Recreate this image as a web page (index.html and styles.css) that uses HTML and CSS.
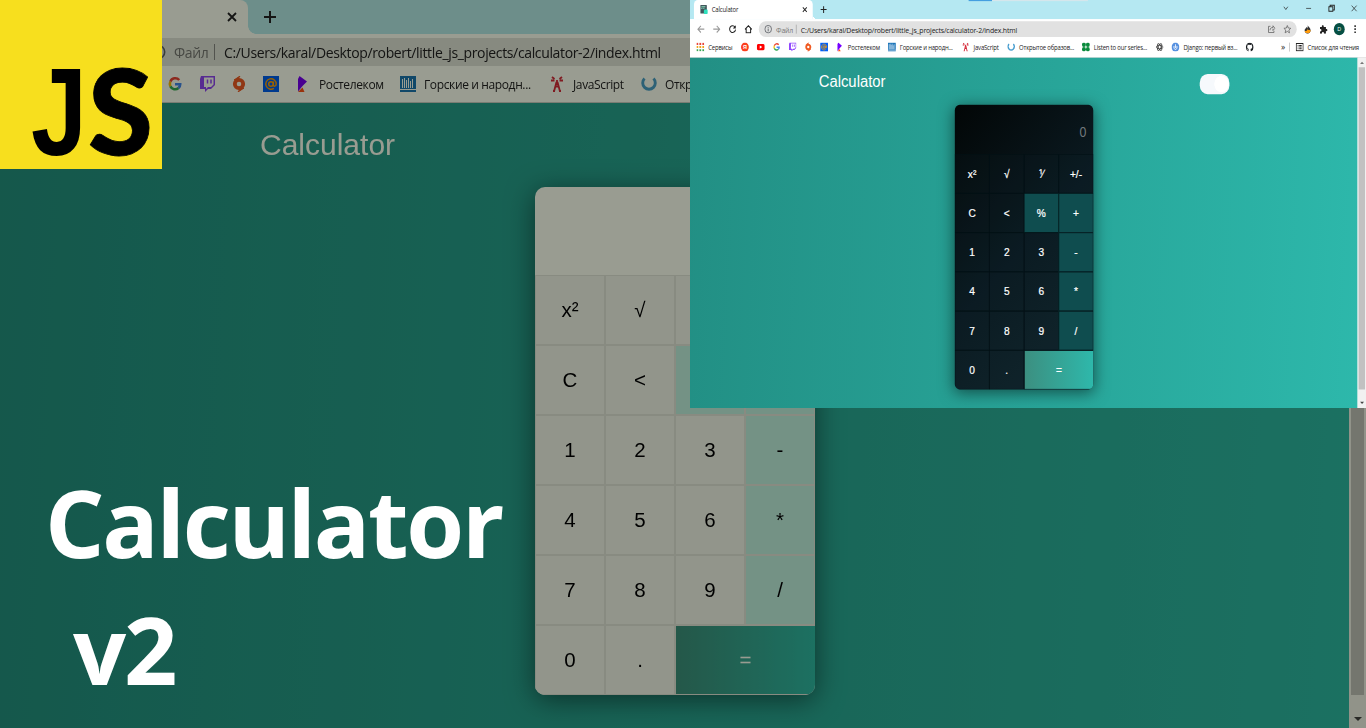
FILE: index.html
```html
<!DOCTYPE html>
<html lang="ru">
<head>
<meta charset="utf-8">
<title>Calculator v2</title>
<link rel="stylesheet" href="styles.css">
</head>
<body>
<svg class="sprite" aria-hidden="true">
  <symbol id="close" viewBox="0 0 16 16"><path d="M4 4l8 8M12 4l-8 8" stroke="#222" stroke-width="1.8" fill="none"/></symbol>
  <symbol id="plus" viewBox="0 0 16 16"><path d="M8 2v12M2 8h12" stroke="#222" stroke-width="2" fill="none"/></symbol>
  <symbol id="info" viewBox="0 0 16 16"><circle cx="8" cy="8" r="6.7" stroke="#5f6368" stroke-width="1.6" fill="none"/><path d="M8 7v5M8 4v1.6" stroke="#5f6368" stroke-width="1.7"/></symbol>
  <symbol id="google" viewBox="0 0 16 16"><g fill="none" stroke-width="2.6"><path d="M12.2 4A5.2 5.2 0 0 0 3.4 5.6" stroke="#ea4335"/><path d="M3.4 5.6a5.2 5.2 0 0 0 0 4.8" stroke="#fbbc05"/><path d="M3.4 10.4A5.2 5.2 0 0 0 11.5 12" stroke="#34a853"/><path d="M8 8.2h5.2a5.2 5.2 0 0 1-1.7 3.8" stroke="#4285f4"/></g></symbol>
  <symbol id="twitch" viewBox="0 0 16 16"><path d="M2 0h14v9l-4 4H9l-3 3v-3H1V3z" fill="#9146ff"/><path d="M5 1.500h9.500v7L12 11H9l-2 2v-2H5z" fill="#fff"/><path d="M8.500 3.500v4M12 3.500v4" stroke="#9146ff" stroke-width="1.500"/></symbol>
  <symbol id="origin" viewBox="0 0 16 16"><circle cx="8" cy="8" r="4.200" fill="none" stroke="#f05a22" stroke-width="3.800"/><path d="M9 0L7 3 3 4zM7 16l2-3 4-1z" fill="#f05a22" stroke="#f05a22"/></symbol>
  <symbol id="mail" viewBox="0 0 16 16"><rect width="16" height="16" fill="#005ff9"/><circle cx="8" cy="8" r="2.300" fill="none" stroke="#ff9e00" stroke-width="1.500"/><path d="M10.400 5.500v3.400c0 2 2.800 1.600 2.800-.9a5.200 5.200 0 1 0-2.300 4.300" fill="none" stroke="#ff9e00" stroke-width="1.400"/></symbol>
  <symbol id="rtk" viewBox="0 0 16 16"><path d="M4.500 0L12 5.500 7.500 10 3 15.500V3z" fill="#7700ff"/><path d="M3 16l4.500-4.500L9.500 16z" fill="#ff4f12"/></symbol>
  <symbol id="radio" viewBox="0 0 16 16"><rect width="16" height="16" fill="#1c75b9"/><path d="M2.500 3v9M4.500 2v10M6.500 4v8M8.500 2v10M10.500 5v7M12.500 3v9" stroke="#fff" stroke-width="1"/><path d="M0 13.500h16" stroke="#fff"/></symbol>
  <symbol id="tower" viewBox="0 0 16 16"><path d="M7.500 6L5 15.500M8.500 6L11 15.500M6 10.500h4M4 15h2M10 15h2M3 1l2.500 2M13 1l-2.500 2M2 4.500h3.500M14 4.500h-3.500M8 4v5" stroke="#d52b3a" stroke-width="1.800" fill="none"/></symbol>
  <symbol id="ring" viewBox="0 0 16 16"><path d="M3.500 2.500A6.300 6.300 0 1 0 12.500 2.500" stroke="#4a9fd0" stroke-width="2.900" fill="none"/></symbol>
</svg>

<main class="stage">
  <section class="window light">
    <div class="tabs">
      <div class="tab"><svg class="tab-close"><use href="#close"/></svg></div>
      <svg class="tab-plus"><use href="#plus"/></svg>
    </div>
    <div class="toolbar">
      <div class="nav"></div>
      <div class="address">
        <svg class="i16"><use href="#info"/></svg><span class="scheme">Файл</span><i class="bar"></i><span class="url">C:/Users/karal/Desktop/robert/little_js_projects/calculator-2/index.html</span>
      </div>
    </div>
    <div class="bookmarks from-google">
      <a><svg><use href="#google"/></svg></a>
      <a><svg><use href="#twitch"/></svg></a>
      <a><svg><use href="#origin"/></svg></a>
      <a><svg><use href="#mail"/></svg></a>
      <a><svg><use href="#rtk"/></svg><span class="t-rtk">Ростелеком</span></a>
      <a><svg><use href="#radio"/></svg><span class="t-radio">Горские и народн...</span></a>
      <a><svg><use href="#tower"/></svg><span class="t-js">JavaScript</span></a>
      <a><svg><use href="#ring"/></svg><span class="t-open">Откр</span></a>
    </div>
    <div class="page">
      <div class="content">
        <h2>Calculator</h2>
        <div class="calc">
          <div class="display"></div>
          <div class="keys">
            <b>x²</b><b>√</b><b></b><b></b>
            <b>C</b><b>&lt;</b><b class="op"></b><b class="op"></b>
            <b>1</b><b>2</b><b>3</b><b class="op">-</b>
            <b>4</b><b>5</b><b>6</b><b class="op">*</b>
            <b>7</b><b>8</b><b>9</b><b class="op">/</b>
            <b>0</b><b>.</b><b class="equals">=</b>
          </div>
        </div>
      </div>
      <div class="scroll"><i class="up"></i><i class="thumb"></i><i class="down"></i></div>
    </div>
  </section>

  <section class="preview">
    <div class="window dark">
      <div class="tabs">
        <div class="tab">
          <svg class="i16" viewBox="0 0 16 16"><rect x="1" width="13" height="15" rx="1" fill="#42565c"/><path d="M3 3h8M3 6h2M7 6h2" stroke="#8db" stroke-width="2"/><rect x="8" y="8" width="8" height="8" rx="2" fill="#2fe0bd"/></svg>
          <span class="tab-name">Calculator</span>
          <svg class="tab-close"><use href="#close"/></svg>
        </div>
        <svg class="tab-plus"><use href="#plus"/></svg>
        <i class="progress"></i>
        <div class="controls">
          <svg viewBox="0 0 16 16"><path d="M4 5l4 5 4-5"/></svg>
          <svg viewBox="0 0 16 16"><path d="M3 8h10"/></svg>
          <svg viewBox="0 0 16 16"><path d="M3 5h8v8H3zM5.500 5V2.500H14V11h-3" stroke-width="1.800"/></svg>
          <svg viewBox="0 0 16 16"><path d="M3 3l10 10M13 3L3 13"/></svg>
        </div>
      </div>
      <div class="toolbar">
        <div class="nav">
          <svg class="dim" viewBox="0 0 16 16"><path d="M15 8H2M8 2L2 8l6 6"/></svg>
          <svg class="dim" viewBox="0 0 16 16"><path d="M1 8h13M8 2l6 6-6 6"/></svg>
          <svg viewBox="0 0 16 16"><path d="M13 4.500A6 6 0 1 0 14 9"/><path d="M14.500 1v6h-6z" fill="#222" stroke="none"/></svg>
          <svg viewBox="0 0 16 16"><path d="M1 8.500L8 2l7 6.500M3.500 7v7.500h9V7"/></svg>
        </div>
        <div class="address">
          <svg class="i16"><use href="#info"/></svg><span class="scheme">Файл</span><i class="bar"></i><span class="url">C:/Users/karal/Desktop/robert/little_js_projects/calculator-2/index.html</span>
          <div class="page-actions">
            <svg viewBox="0 0 16 16"><path d="M6 3H2v11h11v-3M5 10c0-4 3-5 6-5V2l4 4.500-4 4V7"/></svg>
            <svg viewBox="0 0 16 16"><path d="M8 1.500l2 4.500 5 .5-3.800 3.200 1.200 5L8 12l-4.400 2.700 1.200-5L1 6.500 6 6z"/></svg>
          </div>
        </div>
        <div class="extensions">
          <svg viewBox="0 0 16 16"><path d="M8 0c1 4 6 5 6 10 0 8-12 8-12 0 0-3 3-3 3-6 2 1 2 2 2 3 1-2 2-4 1-7z" fill="#333"/><path d="M8 8c3 3 6 0 6 3-1 6-11 6-12 0 3 1 4 0 6-3z" fill="#ff9b0b"/></svg>
          <svg viewBox="0 0 16 16"><path d="M1 4h4c-2-4 5-4 3.500 0H13v4c4-2 4 5 0 3.500V16H9c1-4-5-4-4 0H1v-4c4 1 4-5 0-4z" fill="#222"/></svg>
          <span class="avatar">D</span>
          <svg viewBox="0 0 16 16"><path d="M8 1v3M8 6.500v3M8 12v3" stroke="#222" stroke-width="3"/></svg>
        </div>
      </div>
      <div class="bookmarks">
        <a><svg viewBox="0 0 16 16"><g stroke-width="3.600" stroke-dasharray="3.600 2.400"><path d="M0 2.300h16" stroke="#e8463a"/><path d="M0 8h16" stroke="#f2a31b"/><path d="M0 13.700h16" stroke="#39a653"/></g></svg><span class="t-apps">Сервисы</span></a>
        <a><svg viewBox="0 0 16 16"><circle cx="8" cy="8" r="8" fill="#fc3f1d"/><text x="4.300" y="12" class="ya">Я</text></svg></a>
        <a><svg viewBox="0 0 16 16"><rect y="2.500" width="16" height="11" rx="3" fill="#f00"/><path d="M6 5l5 3-5 3z" fill="#fff"/></svg></a>
        <a><svg><use href="#google"/></svg></a>
        <a><svg><use href="#twitch"/></svg></a>
        <a><svg><use href="#origin"/></svg></a>
        <a><svg><use href="#mail"/></svg></a>
        <a><svg><use href="#rtk"/></svg><span class="t-rtk">Ростелеком</span></a>
        <a><svg><use href="#radio"/></svg><span class="t-radio">Горские и народн...</span></a>
        <a><svg><use href="#tower"/></svg><span class="t-js">JavaScript</span></a>
        <a><svg><use href="#ring"/></svg><span class="t-open">Открытое образов...</span></a>
        <a><svg viewBox="0 0 16 16"><g fill="#0a8a3c"><circle cx="4" cy="4" r="4"/><circle cx="12" cy="4" r="4"/><circle cx="4" cy="12" r="4"/><circle cx="12" cy="12" r="4"/></g></svg><span class="t-listen">Listen to our series...</span></a>
        <a><svg viewBox="0 0 16 16"><g fill="none" stroke="#333" stroke-width="1.300"><ellipse cx="8" cy="8" rx="7" ry="3"/><ellipse cx="8" cy="8" rx="7" ry="3" transform="rotate(60 8 8)"/><ellipse cx="8" cy="8" rx="7" ry="3" transform="rotate(120 8 8)"/></g></svg></a>
        <a><svg viewBox="0 0 16 16"><circle cx="8" cy="8" r="8" fill="#5590e0"/><path d="M8 3v7M5 6v4l3 3 3-3V6" stroke="#fff" stroke-width="1.600" fill="none"/></svg><span class="t-django">Django: первый вз...</span></a>
        <a><svg viewBox="0 0 16 16"><path d="M8 .2a8 8 0 0 0-2.500 15.500c.4.100.5-.2.500-.4v-1.500c-2.200.5-2.700-1-2.700-1-.4-.9-.9-1.100-.9-1.100-.7-.5.1-.5.1-.5.800.1 1.200.8 1.200.8.700 1.200 1.900.9 2.300.7.100-.5.300-.9.500-1.100-1.800-.2-3.600-.9-3.600-4 0-.9.300-1.600.8-2.100-.1-.2-.4-1 .1-2.100 0 0 .7-.2 2.200.8a7.600 7.600 0 0 1 4 0c1.500-1 2.200-.8 2.200-.8.400 1.100.200 1.900.1 2.100.5.600.8 1.300.8 2.100 0 3.100-1.900 3.700-3.700 3.900.3.300.6.800.6 1.500v2.300c0 .2.100.5.600.4A8 8 0 0 0 8 .2z" fill="#1b1f23"/></svg></a>
        <span class="more">»</span><i class="bar"></i>
        <a class="reading"><svg viewBox="0 0 16 16"><path d="M1 1.500h14v13H1zM4 5h1.500M7 5h5M4 8h1.500M7 8h5M4 11h1.500M7 11h5" stroke="#222" stroke-width="1.800" fill="none"/></svg><span class="t-read">Список для чтения</span></a>
      </div>
      <div class="page">
        <div class="content">
          <h2>Calculator</h2>
          <i class="toggle"></i>
          <div class="calc">
            <div class="display">0</div>
            <div class="keys">
              <b>x²</b><b>√</b><b>⅟</b><b>+/-</b>
              <b>C</b><b>&lt;</b><b class="op">%</b><b class="op">+</b>
              <b>1</b><b>2</b><b>3</b><b class="op">-</b>
              <b>4</b><b>5</b><b>6</b><b class="op">*</b>
              <b>7</b><b>8</b><b>9</b><b class="op">/</b>
              <b>0</b><b>.</b><b class="equals">=</b>
            </div>
          </div>
        </div>
        <div class="scroll"><i class="up"></i><i class="thumb"></i><i class="down"></i></div>
      </div>
    </div>
  </section>

  <svg class="js-logo" viewBox="0 0 162 169">
    <rect width="162" height="169" fill="#f7df1e"/>
    <text class="letter-j" transform="translate(31 155)" textLength="56" lengthAdjust="spacingAndGlyphs">J</text>
    <text class="letter-s" transform="translate(88 155)" textLength="65" lengthAdjust="spacingAndGlyphs">S</text>
  </svg>
  <h1 class="headline"><span>Calculator</span><span class="version">v2</span></h1>
</main>
</body>
</html>
```
FILE: styles.css
```css
* { box-sizing: border-box; }
body { margin: 0; background: #165a4f; }
.sprite { position: absolute; width: 0; height: 0; }

.stage { position: relative; width: 1366px; height: 728px; overflow: hidden; }
.window {
  position: relative;
  display: flex;
  flex-direction: column;
  width: 1366px;
  height: 728px;
  overflow: hidden;
  background: #fff;
  font-family: "Open Sans", "Noto Sans", sans-serif;
  color: #222;
}
.window.light::after {
  content: "";
  position: absolute;
  inset: 0;
  background: #999c91;
  mix-blend-mode: multiply;
}
.preview { position: absolute; left: 690px; top: 0; width: 676px; height: 408px; overflow: hidden; }
.preview .window { transform: scale(.49488, .56044); transform-origin: 0 0; }

.tabs { display: flex; align-items: center; height: 34px; padding-left: 8px; background: #b5e8f2; position: relative; }
.tab {
  display: flex;
  align-items: center;
  gap: 8px;
  width: 240px;
  height: 34px;
  padding: 0 8px 0 12px;
  background: #fff;
  border-radius: 8px 8px 0 0;
  position: relative;
}
.tab::after {
  content: "";
  position: absolute;
  left: 100%;
  bottom: 0;
  width: 8px;
  height: 8px;
  background: radial-gradient(circle at 100% 0, transparent 7.5px, #fff 8px);
}
.tab-name { font-size: 12px; letter-spacing: -.3px; }
.tab-close { width: 16px; height: 16px; margin-left: auto; }
.tab-plus { width: 16px; height: 16px; margin-left: 14px; }
.progress { position: absolute; left: 563px; top: 0; width: 241px; height: 2px; background: linear-gradient(to right, #459fe0 47px, #d5e6ec 47px); }
.controls { display: flex; gap: 30px; margin-left: auto; padding-right: 16px; margin-top: -5px; }
.controls svg { width: 16px; height: 16px; fill: none; stroke: #222; stroke-width: 1.3; }

.i16 { width: 16px; height: 16px; flex: none; }
.toolbar { display: flex; align-items: center; height: 36px; }
.nav { display: flex; gap: 16px; width: 139px; padding-left: 14px; flex: none; }
.nav svg { width: 16px; height: 16px; fill: none; stroke: #222; stroke-width: 2; }
.nav .dim { stroke: #999; }
.address { display: flex; align-items: center; width: 1087px; height: 28px; padding-left: 11px; border-radius: 14px; background: #e1e1e1; white-space: nowrap; font-size: 14px; }
.light .address { width: 1227px; border-radius: 14px 0 0 14px; }
.scheme { width: 33px; margin-left: 8px; color: #777; letter-spacing: -.4px; }
.bar { width: 1px; height: 16px; background: #888; }
.address .bar { margin: 0 9px 0 7px; }
.url { letter-spacing: -.355px; }
.page-actions { display: flex; gap: 16px; margin-left: auto; padding-right: 11px; }
.page-actions svg { width: 16px; height: 16px; fill: none; stroke: #666; stroke-width: 1.5; }
.extensions { display: flex; align-items: center; gap: 14px; padding-left: 13px; }
.extensions svg { width: 18px; height: 16px; }
.avatar { width: 22px; height: 22px; margin: 0 -2px; border-radius: 50%; background: #064f43; color: #fff; font-size: 11px; line-height: 22px; text-align: center; }

.bookmarks { display: flex; align-items: center; gap: 16px; height: 33px; padding: 0 0 4px 13px; border-bottom: 1px solid #ccc; font-size: 12px; white-space: nowrap; }
.bookmarks.from-google { padding-left: 167px; }
.bookmarks a { display: flex; align-items: center; gap: 8px; flex: none; }
.bookmarks svg { width: 16px; height: 16px; flex: none; }
.bookmarks span { display: block; letter-spacing: -.37px; }
.ya { font: bold 11px "Liberation Sans", sans-serif; fill: #fff; }
.t-apps { width: 50px; }
.t-rtk { width: 65px; }
.t-radio { width: 109px; }
.t-js { width: 52px; }
.t-open { width: 111px; }
.t-listen { width: 109px; }
.t-django { width: 110px; }
.more { margin-left: 39px; width: 8px; font-size: 17px; line-height: 16px; }
.bookmarks .bar { margin-left: -7px; background: #999; flex: none; }
.reading { margin-left: -4px; }

.page { display: flex; height: 625px; flex: none; }
.content { display: grid; grid-template-columns: 535px 280px 1fr; grid-template-rows: 84px 508px; flex: 1; background: linear-gradient(93deg, #228f84, #2db8ab); }
h2 { grid-column: 1 / 2; margin: 24px 0 0 260px; font: 400 30px/36px "Liberation Sans", Arial, sans-serif; color: #fff; }
.toggle { grid-column: 3; width: 60px; height: 36px; margin: 29px 0 0 215px; border-radius: 16px; background: radial-gradient(circle at 44px 18px, #fff 14px, #f6f9fc 15px); }
.calc { grid-column: 2; grid-row: 2; border-radius: 10px; box-shadow: 0 5px 28px rgba(0, 0, 0, .5); font-family: "Liberation Sans", Arial, sans-serif; }
.display { height: 88px; padding: 0 14px; border-radius: 10px 10px 0 0; font-size: 25px; line-height: 98px; text-align: right; color: #747b7e; }
.keys { display: grid; grid-template-columns: repeat(4, 70px); grid-auto-rows: 70px; border-radius: 0 0 10px 10px; overflow: hidden; }
.keys b { display: flex; align-items: center; justify-content: center; border: 1px solid; font-weight: 400; font-size: 20.5px; }
.keys .equals { grid-column: span 2; border-right: 0; background: linear-gradient(to right, #3c8f80, #2eb8ab); color: #fff; }

.light .calc { background: #fff; color: #000; }
.light b { background: #f3f4f4; border-color: #e2e3e3; }
.light .op { background: #c2eeea; }
.dark .calc { background: linear-gradient(135deg, #020606, #0b1a21 50%, #12272e); }
.dark b { color: #fff; border-color: #031015; background: rgba(20, 40, 48, .12); -webkit-text-stroke: .4px #fff; }
.dark .op { background: #0f4d4f; }

.scroll { display: flex; flex-direction: column; align-items: center; width: 17px; background: #f1f1f1; padding: 6px 0; }
.up, .down { border: 4px solid transparent; width: 0; height: 0; }
.up { border-bottom-color: #777; border-top: 0; margin-top: 1px; }
.down { border-top-color: #444; border-bottom: 0; margin-top: auto; margin-bottom: 1px; }
.thumb { width: 13px; height: 575px; margin-top: 6px; background: #c1c1c1; }

.js-logo { position: absolute; left: 0; top: 0; width: 162px; height: 169px; }
.letter-j { font: 700 124px "Liberation Sans", Arial, sans-serif; fill: #000; }
.letter-s { font: 900 119px Lato, sans-serif; fill: #000; stroke: #000; stroke-width: .8px; }
.headline { position: absolute; left: 45px; top: 458px; display: flex; flex-direction: column; margin: 0; font: 700 93.5px/127px "Open Sans", "Noto Sans", sans-serif; letter-spacing: -2.3px; color: #fff; white-space: nowrap; }
.version { padding-left: 28px; }
```
